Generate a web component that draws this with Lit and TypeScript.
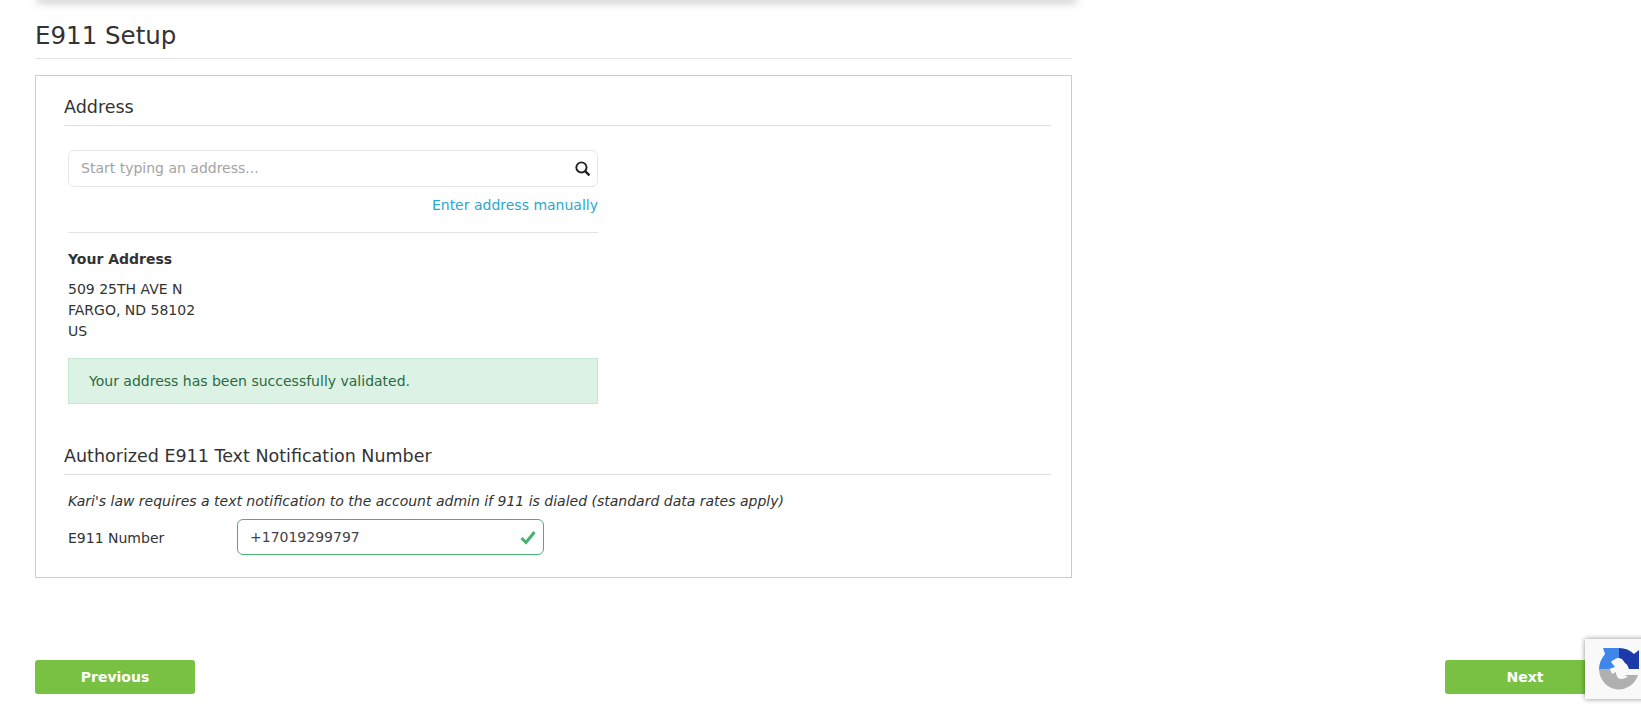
import { LitElement, html, css, svg } from "lit";
import { customElement } from "lit/decorators.js";

@customElement("app-root")
export class AppRoot extends LitElement {
  static styles = css`
    :host { display: block; position: relative; width: 1641px; height: 706px; overflow: hidden; background: #fff;
      font-family: "DejaVu Sans", sans-serif; font-size: 14px; color: #333; }
    * { box-sizing: border-box; }
    .page { display: flex; flex-direction: column; height: 100%; padding: 0 36px 12px 35px; }
    .nav { height: 0; margin-left: 4px; width: 1036px; box-shadow: 0 0 8px 2px rgba(0,0,0,.35); }
    .main { width: 1037px; }
    h1 { margin: 0; height: 59px; padding-top: 20px; font-size: 24.5px; line-height: 32px; font-weight: 400; color: #333; border-bottom: 1px solid #e3e3e3; }
    .card { margin-top: 16px; height: 503px; border: 1px solid #ccc; padding: 19px 20px 0 28px; }
    h2 { margin: 0; font-size: 17.5px; line-height: 24px; height: 31px; font-weight: 400; color: #333; border-bottom: 1px solid #e0e0e0; }
    .body { padding-left: 4px; }
    .col { width: 534px; }
    .search { margin-top: 24px; height: 37px; display: flex; align-items: center; justify-content: space-between; padding: 0 6px 0 12px; border: 1px solid #e6e6e6; border-radius: 6px; color: #a3a3a3; }
    .search span { padding-bottom: 2px; }
    .link-row { margin-top: 8px; height: 20px; line-height: 20px; text-align: right; color: #2aa8cf; }
    .rule { margin-top: 17px; border-top: 1px solid #e3e3e3; }
    .who { margin-top: 16px; line-height: 20px; font-weight: 700; }
    .addr { margin-top: 10px; line-height: 21px; }
    .alert { margin-top: 16px; height: 46px; display: flex; align-items: center; padding-left: 20px; background: #dcf2e4; border: 1px solid #c7e8d3; color: #2a6b42; }
    .auth { margin-top: 40px; }
    .note { margin-top: 16px; line-height: 20px; font-style: italic; }
    .row { margin-top: 8px; display: flex; align-items: center; }
    .row label { width: 169px; padding-top: 2px; }
    .phone { width: 307px; height: 36px; display: flex; align-items: center; justify-content: space-between; padding: 0 7px 0 12px; border: 1px solid #4caf73; border-radius: 6px; color: #444; }
    .footer { margin-top: auto; display: flex; justify-content: space-between; }
    button { width: 160px; height: 34px; padding: 0; border: 0; border-radius: 3px; background: #79c143; color: #fff; font: 700 14px "DejaVu Sans", sans-serif; }
    .recaptcha { position: absolute; left: 1585px; top: 639px; width: 70px; height: 60px; background: #f9f9f9; box-shadow: 0 0 5px rgba(0,0,0,.45); }
    svg { display: block; }
  `;

  render() {
    return html`<div class="page">
      <div class="nav"></div>
      <div class="main">
        <h1>E911 Setup</h1>
        <div class="card">
          <h2>Address</h2>
          <div class="body col">
            <div class="search">
              <span>Start typing an address...</span>
              <svg width="17" height="17" viewBox="0 0 16 16" fill="none" stroke="#222" stroke-width="1.8"><circle cx="7" cy="7" r="4.8"></circle><path d="M10.5 10.5 14.5 14.5" stroke-width="2.2"></path></svg>
            </div>
            <div class="link-row">Enter address manually</div>
            <div class="rule"></div>
            <div class="who">Your Address</div>
            <div class="addr">509 25TH AVE N<br />FARGO, ND 58102<br />US</div>
            <div class="alert">Your address has been successfully validated.</div>
          </div>
          <h2 class="auth">Authorized E911 Text Notification Number</h2>
          <div class="body">
            <div class="note">Kari's law requires a text notification to the account admin if 911 is dialed (standard data rates apply)</div>
            <div class="row">
              <label>E911 Number</label>
              <div class="phone">
                <span>+17019299797</span>
                <svg width="16" height="17" viewBox="0 0 16 16" fill="none" stroke="#48b16e" stroke-width="3"><path d="M1.5 8.5 6 13 14.5 2.5"></path></svg>
              </div>
            </div>
          </div>
        </div>
      </div>
      <div class="footer">
        <button>Previous</button>
        <button>Next</button>
      </div>
    </div>
    <div class="recaptcha">
      <svg width="70" height="60" viewBox="-34 -30 70 60">
        ${svg`<path d="M0 -21 C6 -21 11 -19 15 -15 L20 -19 V0 H10 C9 -3 8 -5 6 -6 L3 -10 L0 -11 Z" fill="#1c3aa9"></path>
        <path d="M-20 0 C-20 -5 -18 -10 -14 -15 L-16 -21 H0 V-11 C-3 -11 -6 -9 -8 -7 L-4 -2 L-10 0 Z" fill="#3f86ea"></path>
        <path d="M-20 0 H-9 L-7 5 L-3 3 C-3 7 -1 10 2 10 C4 10 6 9 9 8 L6 6 H19 A20 21 0 0 1 -20 0 Z" fill="#b0b0b0"></path>`}
      </svg>
    </div>`;
  }
}
